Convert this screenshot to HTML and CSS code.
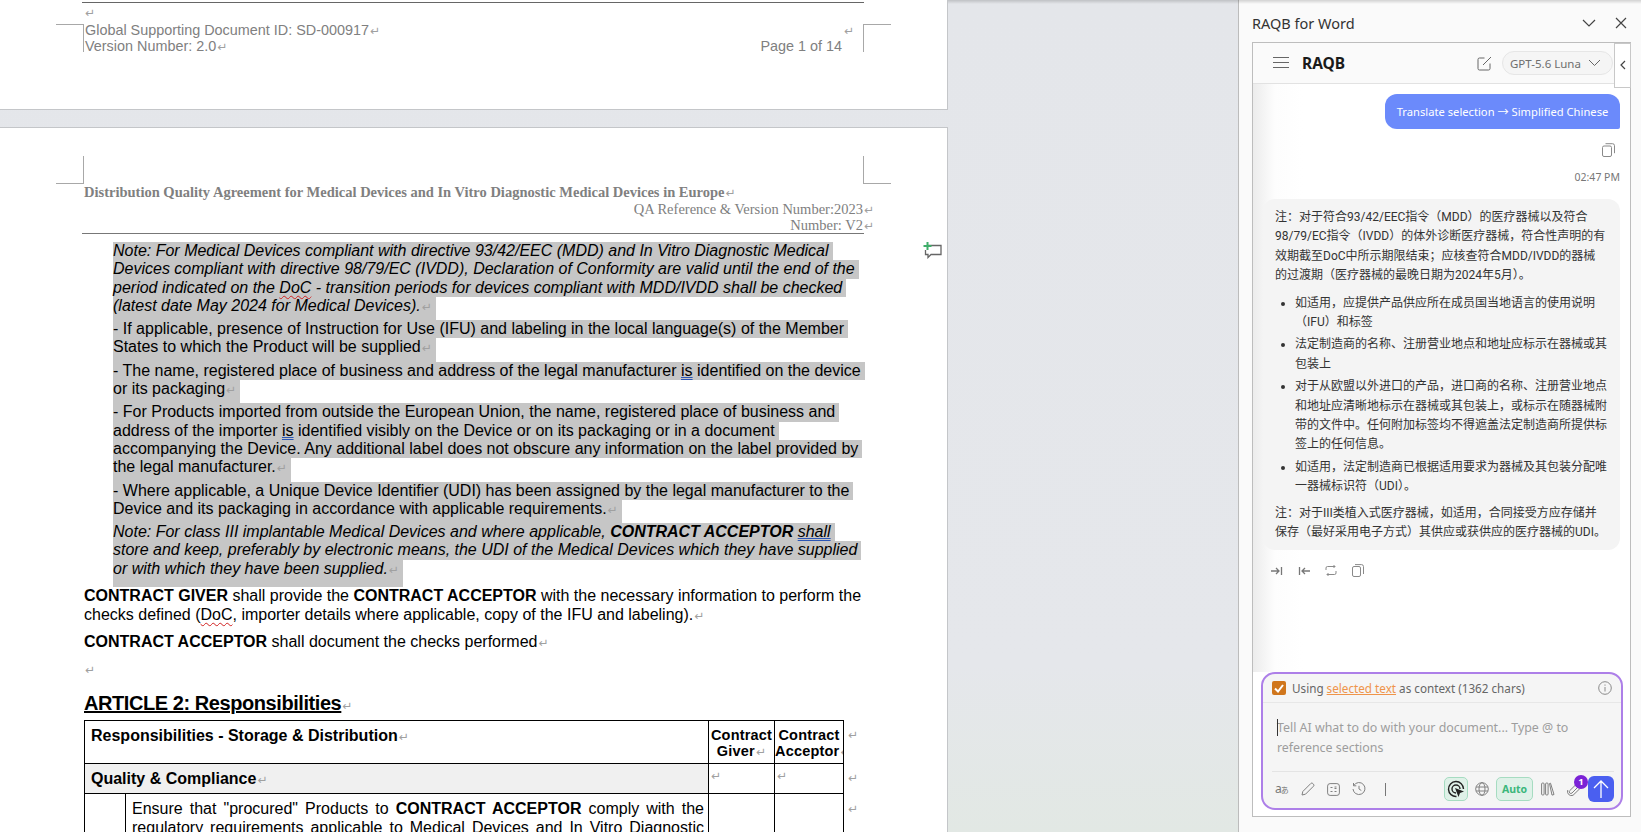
FILE: index.html
```html
<!DOCTYPE html>
<html lang="en">
<head>
    <meta charset="UTF-8">
    <title>RAQB for Word</title>
    <link rel="stylesheet" href="styles.css">
</head>
<body>
<div class="app">
    <main class="doc-area">
        <section class="page page-one">
            <div class="rule rule-top"></div>
            <div class="pm-line"><span class="pm">↵</span></div>
            <div class="footer-row">
                <div>Global Supporting Document ID: SD-000917<span class="pm">↵</span><br>Version Number: 2.0<span class="pm">↵</span></div>
                <div class="footer-right"><span class="pm pm-up">↵</span><br>Page 1 of 14</div>
            </div>
            <i class="crop crop-bl"></i>
            <i class="crop crop-br"></i>
        </section>

        <section class="page page-two">
            <i class="crop crop-tl"></i>
            <i class="crop crop-tr"></i>
            <svg class="comment-icon" width="19" height="17" viewBox="0 0 19 17">
                <path d="M4 3.500h14v9H8l-3 3v-3H2.500V8" fill="#fff" stroke="#666" stroke-width="1.300"/>
                <path d="M4.500 0v8M0.500 4h8" stroke="#3fae6a" stroke-width="2"/>
            </svg>
            <header class="doc-header">
                <div class="doc-title">Distribution Quality Agreement for Medical Devices and In Vitro Diagnostic Medical Devices in Europe<span class="pm">↵</span></div>
                <div class="doc-ref">QA Reference &amp; Version Number:2023<span class="pm">↵</span></div>
                <div class="doc-ref">Number: V2<span class="pm">↵</span></div>
            </header>
            <div class="rule"></div>

            <div class="selected">
                <p class="sel-para note">
                    <span class="ln">Note: For Medical Devices compliant with directive 93/42/EEC (MDD) and In Vitro Diagnostic Medical</span>
                    <span class="ln">Devices compliant with directive 98/79/EC (IVDD), Declaration of Conformity are valid until the end of the</span>
                    <span class="ln">period indicated on the <u class="typo">DoC</u> - transition periods for devices compliant with MDD/IVDD shall be checked</span>
                    <span class="ln last">(latest date May 2024 for Medical Devices).<span class="pm">↵</span></span>
                </p>
                <p class="sel-para">
                    <span class="ln">- If applicable, presence of Instruction for Use (IFU) and labeling in the local language(s) of the Member</span>
                    <span class="ln last">States to which the Product will be supplied<span class="pm">↵</span></span>
                </p>
                <p class="sel-para">
                    <span class="ln">- The name, registered place of business and address of the legal manufacturer <u class="grammar">is</u> identified on the device</span>
                    <span class="ln last">or its packaging<span class="pm">↵</span></span>
                </p>
                <p class="sel-para">
                    <span class="ln">- For Products imported from outside the European Union, the name, registered place of business and</span>
                    <span class="ln">address of the importer <u class="grammar">is</u> identified visibly on the Device or on its packaging or in a document</span>
                    <span class="ln">accompanying the Device. Any additional label does not obscure any information on the label provided by</span>
                    <span class="ln last">the legal manufacturer.<span class="pm">↵</span></span>
                </p>
                <p class="sel-para">
                    <span class="ln">- Where applicable, a Unique Device Identifier (UDI) has been assigned by the legal manufacturer to the</span>
                    <span class="ln last">Device and its packaging in accordance with applicable requirements.<span class="pm">↵</span></span>
                </p>
                <p class="sel-para note">
                    <span class="ln">Note: For class III implantable Medical Devices and where applicable, <b>CONTRACT ACCEPTOR</b> <u class="grammar">shall</u></span>
                    <span class="ln">store and keep, preferably by electronic means, the UDI of the Medical Devices which they have supplied</span>
                    <span class="ln last tail">or with which they have been supplied.<span class="pm">↵</span></span>
                </p>
            </div>

            <p class="body-para"><b>CONTRACT GIVER</b> shall provide the <b>CONTRACT ACCEPTOR</b> with the necessary information to perform the<br>checks defined (<u class="typo">DoC</u>, importer details where applicable, copy of the IFU and labeling).<span class="pm">↵</span></p>
            <p class="body-para"><b>CONTRACT ACCEPTOR</b> shall document the checks performed<span class="pm">↵</span></p>
            <p class="body-para empty"><span class="pm">↵</span></p>
            <h2 class="article">ARTICLE 2: Responsibilities<span class="pm">↵</span></h2>

            <table class="resp-table">
                <colgroup>
                    <col class="c-num"><col class="c-text"><col class="c-role"><col class="c-role2"><col class="c-end">
                </colgroup>
                <tr class="head-row">
                    <th colspan="2">Responsibilities - Storage &amp; Distribution<span class="pm">↵</span></th>
                    <th class="role">Contract<br>Giver<span class="pm">↵</span></th>
                    <th class="role">Contract<br>Acceptor<span class="pm">↵</span></th>
                    <td class="end"><span class="pm">↵</span></td>
                </tr>
                <tr class="section-row">
                    <th colspan="2">Quality &amp; Compliance<span class="pm">↵</span></th>
                    <td class="mark"><span class="pm">↵</span></td>
                    <td class="mark"><span class="pm">↵</span></td>
                    <td class="end"><span class="pm">↵</span></td>
                </tr>
                <tr>
                    <td></td>
                    <td class="item">Ensure that "procured" Products to <b>CONTRACT ACCEPTOR</b> comply with the regulatory requirements applicable to Medical Devices and In Vitro Diagnostic Medical Devices and are supplied with the required documentation.</td>
                    <td></td>
                    <td></td>
                    <td class="end"><span class="pm">↵</span></td>
                </tr>
            </table>
        </section>
    </main>

    <aside class="pane">
        <div class="pane-title">
            <span>RAQB for Word</span>
            <div class="pane-btns">
                <svg width="14" height="14" viewBox="0 0 14 14"><path d="M1 4l6 6 6-6" class="ico"/></svg>
                <svg width="12" height="12" viewBox="0 0 12 12"><path d="M1 1l10 10M11 1L1 11" class="ico"/></svg>
            </div>
        </div>

        <div class="frame">
            <div class="frame-head">
                <svg class="menu" width="16" height="12" viewBox="0 0 16 12"><path d="M0 .5h16M0 5.500h16M0 10.500h16" class="ico-thin"/></svg>
                <strong class="brand">RAQB</strong>
                <svg class="edit" width="15" height="15" viewBox="0 0 15 15"><path d="M7.500 2H2.500a1.500 1.500 0 0 0-1.500 1.500v9A1.500 1.500 0 0 0 2.500 14h9a1.500 1.500 0 0 0 1.500-1.500V7.500M6 9l8-8" class="ico-thin"/></svg>
                <div class="model">GPT-5.6 Luna
                    <svg width="13" height="8" viewBox="0 0 13 8"><path d="M1 1l5.500 5.500L12 1" class="ico-thin"/></svg>
                </div>
            </div>
            <button class="collapse-tab"><svg width="6" height="10" viewBox="0 0 6 10"><path d="M5 1L1 5l4 4" class="ico"/></svg></button>

            <div class="chat">
                <div class="user-bubble">Translate selection → Simplified Chinese</div>
                <div class="msg-tools">
                    <svg width="13" height="14" viewBox="0 0 13 14"><rect x=".5" y="3" width="9" height="10.500" rx="1.500" class="ico-grey"/><path d="M3.500 .7h7a2 2 0 0 1 2 2v7.500" class="ico-grey"/></svg>
                </div>
                <div class="msg-time">02:47 PM</div>

                <div class="ai-bubble" lang="zh-CN">
                    <p>注：对于符合93/42/EEC指令（MDD）的医疗器械以及符合<br>98/79/EC指令（IVDD）的体外诊断医疗器械，符合性声明的有<br>效期截至DoC中所示期限结束；应核查符合MDD/IVDD的器械<br>的过渡期（医疗器械的最晚日期为2024年5月）。</p>
                    <ul>
                        <li>如适用，应提供产品供应所在成员国当地语言的使用说明<br>（IFU）和标签</li>
                        <li>法定制造商的名称、注册营业地点和地址应标示在器械或其<br>包装上</li>
                        <li>对于从欧盟以外进口的产品，进口商的名称、注册营业地点<br>和地址应清晰地标示在器械或其包装上，或标示在随器械附<br>带的文件中。任何附加标签均不得遮盖法定制造商所提供标<br>签上的任何信息。</li>
                        <li>如适用，法定制造商已根据适用要求为器械及其包装分配唯<br>一器械标识符（UDI）。</li>
                    </ul>
                    <p>注：对于III类植入式医疗器械，如适用，合同接受方应存储并<br>保存（最好采用电子方式）其供应或获供应的医疗器械的UDI。</p>
                </div>

                <div class="ai-tools">
                    <svg width="12" height="10" viewBox="0 0 12 10"><path d="M0 5h8M5 2l3 3-3 3M10.500 1v8" class="ico-dark"/></svg>
                    <svg width="12" height="10" viewBox="0 0 12 10"><path d="M12 5H4M7 2L4 5l3 3M1.500 1v8" class="ico-dark"/></svg>
                    <svg width="12" height="11" viewBox="0 0 12 11"><path d="M1 5V3a1.500 1.500 0 0 1 1.500-1.500H10M8.500 0l1.500 1.500L8.500 3M11 6v2a1.500 1.500 0 0 1-1.500 1.500H2M3.500 8L2 9.500 3.500 11" class="ico-grey"/></svg>
                    <svg width="12" height="13" viewBox="0 0 12 13"><rect x=".5" y="2.500" width="8" height="10" rx="1.500" class="ico-grey"/><path d="M3 .6h6.500a2 2 0 0 1 2 2V10" class="ico-grey"/></svg>
                </div>
            </div>

            <div class="composer">
                <div class="context-row">
                    <span class="check"><svg width="10" height="9" viewBox="0 0 10 9"><path d="M1 4.500l3 3 5-6.500" fill="none" stroke="#fff" stroke-width="2"/></svg></span>
                    <span class="context-text">Using <a class="sel-link">selected text</a> as context (1362 chars)</span>
                    <svg class="info" width="14" height="14" viewBox="0 0 14 14"><circle cx="7" cy="7" r="6.300" class="ico-grey"/><path d="M7 6v4.500M7 3.500v1.200" class="ico-grey"/></svg>
                </div>
                <div class="prompt"><i class="caret"></i>Tell AI what to do with your document... Type @ to<br>reference sections</div>
                <div class="tools">
                    <div class="tools-left">
                        <span class="translate-ico">a<small lang="ja">あ</small></span>
                        <svg width="14" height="14" viewBox="0 0 14 14"><path d="M1 13l.8-3.500L9.800 1.500a1.400 1.400 0 0 1 2 0l.7.700a1.400 1.400 0 0 1 0 2L4.500 12.200z" class="ico-dim"/></svg>
                        <svg width="13" height="13" viewBox="0 0 13 13"><rect x=".6" y=".6" width="11.800" height="11.800" rx="2.500" class="ico-dim"/><path d="M3.500 4.500h2M7.500 4h2M7.500 5.500h2M3.500 8.500h2M7.500 8.500h2" class="ico-dim"/></svg>
                        <svg width="14" height="14" viewBox="0 0 14 14"><path d="M1.800 3.500A6 6 0 1 1 1 7M1.500 1v2.800h2.800M7 3.800V7l2.300 1.500" class="ico-dim"/></svg>
                        <span class="tool-bar"></span>
                    </div>
                    <div class="tools-right">
                        <span class="chip chip-ico">
                            <svg width="18" height="18" viewBox="0 0 18 18"><path d="M9.500 16.500A7.500 7.500 0 1 1 16.500 9M9 13a4 4 0 1 1 4-4" fill="none" stroke="#222" stroke-width="1.400"/><path d="M8 8l9 3.500-4 1.500-1.500 4z" fill="#222"/></svg>
                        </span>
                        <svg class="globe" width="14" height="14" viewBox="0 0 14 14"><circle cx="7" cy="7" r="6.300" class="ico-dim"/><ellipse cx="7" cy="7" rx="3" ry="6.300" class="ico-dim"/><path d="M1 5h12M1 9h12" class="ico-dim"/></svg>
                        <span class="chip chip-auto">Auto</span>
                        <svg class="library" width="14" height="14" viewBox="0 0 14 14"><rect x=".6" y="1" width="2.500" height="12" rx="1" class="ico-dim"/><rect x="4.600" y="1" width="2.500" height="12" rx="1" class="ico-dim"/><path d="M8.500 1.500l1-.3 3.500 11.300-2 .6z" class="ico-dim"/></svg>
                        <span class="clip">
                            <svg width="14" height="15" viewBox="0 0 14 15"><path d="M12 4L5 11a1.600 1.600 0 0 1-2.300-2.300L9.500 2a3 3 0 0 1 4 4L6 13.300A4 4 0 0 1 .8 8" class="ico-dim"/></svg>
                            <b class="badge">1</b>
                        </span>
                        <button class="send"><svg width="16" height="18" viewBox="0 0 16 18"><path d="M8 18V1M1 8l7-7 7 7" fill="none" stroke="#fff" stroke-width="1.300"/></svg></button>
                    </div>
                </div>
            </div>
        </div>
    </aside>
</div>
</body>
</html>
```

FILE: styles.css
```css
* {
    box-sizing: border-box;
}

html, body {
    margin: 0;
    height: 100%;
    overflow: hidden;
}

body {
    font-family: "Liberation Sans", Arial, sans-serif;
    background-color: #fafafa;
}

.app {
    position: relative;
    display: flex;
    height: 832px;
}

/* shadow the ribbon drops on everything below it */
.app::before {
    content: "";
    position: absolute;
    left: 0;
    right: 0;
    top: 0;
    height: 4px;
    background: linear-gradient(180deg, rgba(0, 0, 0, 0.16), rgba(0, 0, 0, 0));
}

/* word document side */
.doc-area {
    width: 1239px;
    flex: none;
    overflow: hidden;
    border-right: 1px solid #bcbcbc;
    background: linear-gradient(180deg, #e4e6ea 0, #e5e7eb 80%, #e2e8e4 100%);
}

.page {
    position: relative;
    width: 948px;
    background-color: #fff;
    border-right: 1px solid #c4c6c9;
}

.page-one {
    height: 110px;
    padding-top: 2px;
    border-bottom: 1px solid #c4c6c9;
    margin-bottom: 17px;
    color: #808080;
    font-size: 14.400px;
    line-height: 16px;
}

.page-two {
    height: 720px;
    padding-top: 56px;
    border-top: 1px solid #c4c6c9;
}

.rule {
    width: 782px;
    margin-left: 82px;
    border-top: 1px solid #777;
}

.rule-top {
    border-top-color: #666;
}

.pm {
    font-family: "DejaVu Sans", sans-serif;
    font-size: 12px;
    line-height: 1;
    font-style: normal;
    font-weight: normal;
    color: #a0a0a0;
    margin-left: 1px;
}

.pm-line {
    padding-left: 84px;
    height: 13px;
    line-height: 18px;
}

.footer-row {
    display: flex;
    justify-content: space-between;
    width: 779px;
    margin-left: 85px;
    padding-top: 6px;
}

.footer-right {
    text-align: right;
    padding-right: 22px;
}

.pm-up {
    margin-right: -12px;
}

.crop {
    position: absolute;
    width: 28px;
    height: 28px;
    border: 0 solid #a8a8a8;
}

.crop-bl {
    left: 56px;
    top: 24px;
    border-top-width: 1px;
    border-right-width: 1px;
}

.crop-br {
    left: 863px;
    top: 24px;
    border-top-width: 1px;
    border-left-width: 1px;
}

.crop-tl {
    left: 56px;
    top: 28px;
    border-bottom-width: 1px;
    border-right-width: 1px;
}

.crop-tr {
    left: 863px;
    top: 28px;
    border-bottom-width: 1px;
    border-left-width: 1px;
}

.comment-icon {
    position: absolute;
    left: 923px;
    top: 114px;
}

.doc-header {
    font-family: "Liberation Serif", "Times New Roman", serif;
    color: #808080;
    font-size: 14.500px;
    line-height: 16px;
    padding-left: 84px;
    width: 874px;
    height: 49px;
}

.doc-title {
    margin-bottom: 1px;
    font-weight: bold;
    white-space: nowrap;
}

.doc-ref {
    text-align: right;
}

/* selected paragraphs */
.selected {
    margin-top: 8px;
    padding-left: 113px;
    font-size: 16px;
    line-height: 18.300px;
    color: #000;
}

.sel-para {
    margin: 0;
}

.note {
    font-style: italic;
}

.ln {
    display: block;
    width: fit-content;
    white-space: nowrap;
    background-color: #c6c6c6;
    padding-right: 4px;
}

.ln.last {
    padding-bottom: 5px;
}

.ln.tail {
    padding-bottom: 9px;
}

.typo {
    text-decoration: underline wavy #d02020 1px;
    text-underline-offset: 2px;
}

.grammar {
    text-decoration: underline double #2a55b5 1px;
    text-underline-offset: 1px;
}

.body-para {
    margin: 0 0 9px 84px;
    font-size: 16px;
    line-height: 18.600px;
    white-space: nowrap;
}

.empty {
    height: 17px;
    margin-top: -1px;
    margin-bottom: 14px;
}

.article {
    margin: 0 0 5px 84px;
    font-size: 20px;
    line-height: 24px;
    letter-spacing: -0.430px;
    text-decoration: underline;
    text-decoration-thickness: 2px;
}

.article .pm {
    display: inline-block;
    letter-spacing: 0;
}

/* responsibilities table */
.resp-table {
    margin-left: 84px;
    border-collapse: collapse;
    table-layout: fixed;
    width: 775px;
    font-size: 16px;
    line-height: 18.600px;
}

.c-num {
    width: 41px;
}

.c-text {
    width: 583px;
}

.c-role {
    width: 66px;
}

.c-role2 {
    width: 69px;
}

.c-end {
    width: 16px;
}

.resp-table th, .resp-table td {
    border: 1px solid #000;
    vertical-align: top;
    padding: 5px 6px;
    text-align: left;
}

.resp-table th {
    padding-top: 6px;
}

.resp-table .end {
    border: none;
    padding: 5px 0 0 3px;
}

.head-row {
    height: 43px;
}

.resp-table .head-row th.role {
    font-size: 14.500px;
    line-height: 16px;
    text-align: center;
    letter-spacing: 0.200px;
    padding: 6px 0 0;
    white-space: nowrap;
    overflow: hidden;
}

.section-row {
    height: 29px;
}

.section-row th {
    background-color: #f0f0f0;
}

.resp-table .mark {
    padding: 2px 0 0 1px;
}

.resp-table .item {
    padding: 6px 4px 0 6px;
    text-align: justify;
}

/* task pane */
.pane {
    flex: 1;
    padding: 0 10px 0 13px;
    background-color: #fafafa;
    font-family: "Noto Sans", "Noto Sans CJK SC", sans-serif;
    color: #333;
}

.pane-title {
    display: flex;
    justify-content: space-between;
    align-items: center;
    height: 42px;
    padding-top: 3px;
    font-size: 14.500px;
    color: #333;
}

.pane-btns {
    display: flex;
    align-items: center;
    gap: 19px;
    padding-right: 4px;
}

.ico {
    fill: none;
    stroke: #444;
    stroke-width: 1.200;
}

.ico-thin {
    fill: none;
    stroke: #666;
    stroke-width: 1;
}

.ico-grey {
    fill: none;
    stroke: #8a8a8a;
    stroke-width: 1;
}

.ico-dark {
    fill: none;
    stroke: #777;
    stroke-width: 1.300;
}

.ico-dim {
    fill: none;
    stroke: #808080;
    stroke-width: 1;
}

.frame {
    position: relative;
    display: flex;
    flex-direction: column;
    height: 775px;
    border: 1px solid #bdbdbd;
    background-color: #fff;
}

.frame-head {
    display: flex;
    align-items: center;
    height: 41px;
    padding-left: 20px;
    border-bottom: 1px solid #e2e2e2;
    background-color: #fafafa;
}

.brand {
    margin-left: 13px;
    font-size: 15.500px;
    color: #1a1a1a;
}

.edit {
    margin-left: auto;
}

.model {
    display: flex;
    align-items: center;
    justify-content: space-between;
    width: 111px;
    height: 24px;
    margin: 0 17px 0 10px;
    padding: 0 11px 0 7px;
    border: 1px solid #e6e6e6;
    border-radius: 12px;
    background-color: #f5f5f5;
    font-size: 11.500px;
    color: #6e6e6e;
}

.collapse-tab {
    position: absolute;
    right: -1px;
    top: 0;
    width: 17px;
    height: 45px;
    padding: 0;
    border: 1px solid #c8c8c8;
    background-color: #fff;
}

.chat {
    flex: 1;
    padding: 10px 10px 0;
    background: linear-gradient(90deg, #ececec 0, #fdfdfd 22px, #fff 50px);
}

.user-bubble {
    width: 235px;
    height: 35px;
    margin-left: auto;
    border-radius: 12px 12px 2px 12px;
    background-color: #6b8afb;
    color: #fff;
    font-size: 11.200px;
    line-height: 35px;
    text-align: center;
}

.msg-tools {
    display: flex;
    justify-content: flex-end;
    padding: 14px 5px 0 0;
    height: 28px;
}

.msg-time {
    margin-top: 13px;
    text-align: right;
    font-size: 10.500px;
    line-height: 14px;
    color: #777;
}

.ai-bubble {
    height: 351px;
    margin-top: 15px;
    padding: 9px 10px 0 12px;
    border-radius: 12px;
    background-color: #f4f4f4;
    font-family: Roboto, "Noto Sans CJK SC", sans-serif;
    font-size: 12px;
    line-height: 19.400px;
    color: #333;
    white-space: nowrap;
}

.ai-bubble p {
    margin: 0;
}

.ai-bubble ul {
    margin: 8px 0 0;
    padding-left: 20px;
}

.ai-bubble li {
    margin-bottom: 3px;
}

.ai-bubble ul + p {
    margin-top: 7px;
}

.ai-tools {
    display: flex;
    align-items: center;
    gap: 15px;
    padding: 14px 0 0 8px;
}

.composer {
    width: 362px;
    height: 138px;
    margin: 0 0 6px 8px;
    border: 2px solid #ad7fe8;
    border-radius: 14px;
    background-color: #f5f5f5;
}

.context-row {
    display: flex;
    align-items: center;
    height: 29px;
    padding: 0 9px;
    border-bottom: 1px solid #e7e7e7;
    font-size: 11.700px;
    color: #666;
}

.check {
    display: flex;
    align-items: center;
    justify-content: center;
    width: 14px;
    height: 14px;
    margin-right: 6px;
    border-radius: 2px;
    background-color: #d0761c;
}

.sel-link {
    color: #ef944a;
    text-decoration: underline;
}

.info {
    margin-left: auto;
}

.prompt {
    position: relative;
    height: 68px;
    padding: 15px 9px 0 14px;
    font-size: 12.400px;
    line-height: 20px;
    color: #9d9d9d;
}

.caret {
    position: absolute;
    left: 14px;
    top: 16px;
    height: 17px;
    border-left: 1px solid #333;
}

.tools {
    display: flex;
    align-items: center;
    justify-content: space-between;
    margin: 0 7px 0 9px;
    padding-top: 4px;
    border-top: 1px solid #e4e4e4;
}

.tools-left {
    display: flex;
    align-items: center;
    gap: 12px;
    padding-left: 3px;
}

.translate-ico {
    width: 14px;
    font-size: 12px;
    line-height: 14px;
    color: #777;
    white-space: nowrap;
}

.translate-ico small {
    font-size: 8px;
    margin-left: -1px;
    font-family: "Noto Sans CJK JP", sans-serif;
}

.tool-bar {
    height: 13px;
    margin-left: 7px;
    border-left: 1px solid #777;
}

.tools-right {
    display: flex;
    align-items: center;
}

.chip {
    display: flex;
    align-items: center;
    justify-content: center;
    height: 24px;
    border: 1px solid #a6dcc1;
    border-radius: 5px;
    background-color: #dff1e8;
}

.chip-ico {
    width: 24px;
}

.globe {
    margin: 0 7px 0 7px;
}

.chip-auto {
    width: 37px;
    font-size: 10.500px;
    font-weight: bold;
    color: #3cb77b;
}

.library {
    margin: 0 12px 0 8px;
}

.clip {
    position: relative;
    display: flex;
    margin-right: 7px;
}

.badge {
    position: absolute;
    left: 7px;
    top: -7px;
    width: 14px;
    height: 14px;
    border-radius: 50%;
    background-color: #7b22d6;
    color: #fff;
    font-size: 9.500px;
    line-height: 14px;
    text-align: center;
}

.send {
    display: flex;
    align-items: center;
    justify-content: center;
    width: 26px;
    height: 26px;
    padding: 0;
    border: none;
    border-radius: 6px;
    background-color: #4a5ff0;
}
```
